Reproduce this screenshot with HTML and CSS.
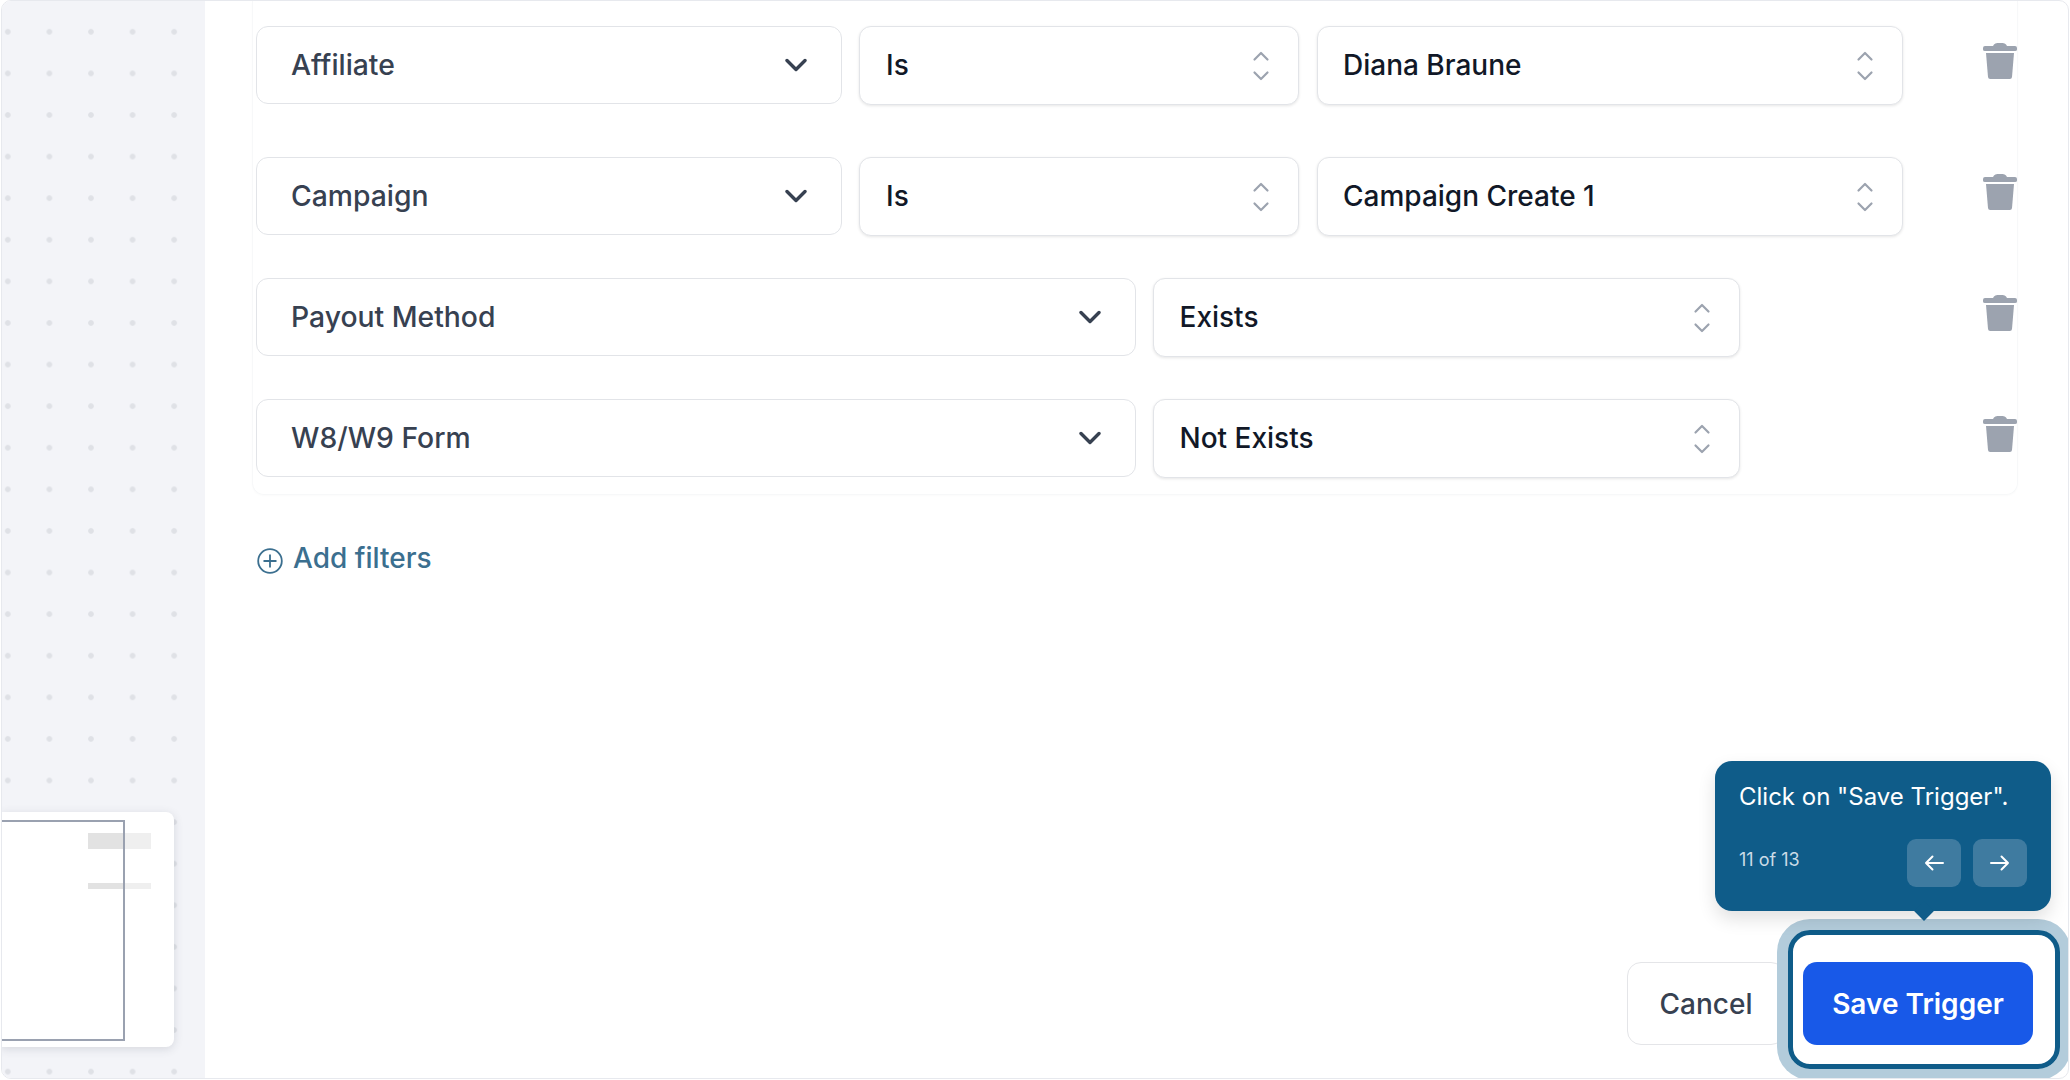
FILE: index.html
```html
<!DOCTYPE html>
<html lang="en">
<head>
<meta charset="utf-8">
<title>Save Trigger</title>
<link rel="stylesheet" href="styles.css">
</head>
<body>
<svg class="defs" width="0" height="0" aria-hidden="true">
  <symbol id="chev" viewBox="0 0 22 14"><path d="M2 2.5 11 11.5 20 2.5" fill="none" stroke="#374151" stroke-width="3.4" stroke-linecap="round" stroke-linejoin="round"/></symbol>
  <symbol id="updown" viewBox="0 0 18 30"><path d="M2.5 8.5 9 2 15.500 8.500M2.500 21.500 9 28 15.500 21.500" fill="none" stroke="#9ca3af" stroke-width="2.200" stroke-linecap="round" stroke-linejoin="round"/></symbol>
  <symbol id="trash" viewBox="0 0 34 38"><path d="M10 4C11 1.500 13 1 17 1S23 1.500 24 4H32Q34 4 34 6V7.500Q34 9 32 9H2Q0 9 0 7.500V6Q0 4 2 4Z" fill="#9ca3af"/><path d="M3 11H31L29 35Q28.800 37 26.800 37H7.200Q5.200 37 5 35Z" fill="#9ca3af"/></symbol>
</svg>
<div class="frame">
  <aside class="canvas">
    <div class="minimap">
      <div class="mini-block mini-block-tall"></div>
      <div class="mini-block mini-block-thin"></div>
      <div class="mini-view"></div>
    </div>
  </aside>
  <main class="main">
    <section class="filters">
      <div class="row row-first">
        <div class="field w-a"><span class="label">Affiliate</span><svg class="chev"><use href="#chev"/></svg></div>
        <div class="field tall w-b"><span class="value">Is</span><svg class="updown"><use href="#updown"/></svg></div>
        <div class="field tall w-c"><span class="value">Diana Braune</span><svg class="updown"><use href="#updown"/></svg></div>
        <svg class="trash"><use href="#trash"/></svg>
      </div>
      <div class="row row-second">
        <div class="field w-a"><span class="label">Campaign</span><svg class="chev"><use href="#chev"/></svg></div>
        <div class="field tall w-b"><span class="value">Is</span><svg class="updown"><use href="#updown"/></svg></div>
        <div class="field tall w-c"><span class="value">Campaign Create 1</span><svg class="updown"><use href="#updown"/></svg></div>
        <svg class="trash"><use href="#trash"/></svg>
      </div>
      <div class="row">
        <div class="field w-d"><span class="label">Payout Method</span><svg class="chev"><use href="#chev"/></svg></div>
        <div class="field tall w-e"><span class="value">Exists</span><svg class="updown"><use href="#updown"/></svg></div>
        <svg class="trash"><use href="#trash"/></svg>
      </div>
      <div class="row">
        <div class="field w-d"><span class="label">W8/W9 Form</span><svg class="chev"><use href="#chev"/></svg></div>
        <div class="field tall w-e"><span class="value">Not Exists</span><svg class="updown"><use href="#updown"/></svg></div>
        <svg class="trash"><use href="#trash"/></svg>
      </div>
    </section>
    <div class="add">
      <svg class="add-icon" viewBox="0 0 26 26"><circle cx="13" cy="13" r="11.800" fill="none" stroke="#3b6f8f" stroke-width="1.800"/><path d="M13 6.500V19.500M6.500 13H19.500" fill="none" stroke="#3b6f8f" stroke-width="1.800"/></svg>
      <span>Add filters</span>
    </div>
    <footer class="actions">
      <button class="btn btn-cancel">Cancel</button>
      <button class="btn btn-save">Save Trigger</button>
    </footer>
  </main>
  <div class="spot"></div>
  <div class="tip">
    <p class="tip-text">Click on "Save Trigger".</p>
    <div class="tip-foot">
      <span class="tip-count">11 of 13</span>
      <div class="tip-nav">
        <span class="tip-btn"><svg width="20" height="16" viewBox="0 0 20 16"><path d="M19 8H2M8.500 1.500 2 8 8.500 14.500" fill="none" stroke="#fff" stroke-width="2" stroke-linecap="round" stroke-linejoin="round"/></svg></span>
        <span class="tip-btn"><svg width="20" height="16" viewBox="0 0 20 16"><path d="M1 8H18M11.500 1.500 18 8 11.500 14.500" fill="none" stroke="#fff" stroke-width="2" stroke-linecap="round" stroke-linejoin="round"/></svg></span>
      </div>
    </div>
  </div>
</div>
</body>
</html>
```
FILE: styles.css
```css
* { box-sizing: border-box; }
html, body { margin: 0; padding: 0; background: #fff; }
body {
  width: 2070px;
  height: 1080px;
  overflow: hidden;
  font-family: Inter, "Liberation Sans", sans-serif;
  padding: 0 1px 1px 1px;
}
.defs { position: absolute; }
.frame {
  position: relative;
  display: flex;
  height: 1079px;
  border: 1px solid #e7e9ee;
  border-radius: 10px;
  overflow: hidden;
  background: #fff;
}
.canvas {
  position: relative;
  flex: 0 0 203px;
  background-color: #f3f4f8;
  background-image: radial-gradient(circle, #dfe1e6 0, #dfe1e6 2.4px, transparent 3.2px);
  background-size: 41.6px 41.6px;
  background-position: -15px 10px;
}
.minimap {
  position: absolute;
  left: -1px;
  top: 811px;
  width: 173px;
  height: 235px;
  background: #fff;
  border-radius: 0 8px 8px 0;
  box-shadow: 0 2px 10px rgba(60, 70, 90, .16);
}
.mini-block { position: absolute; left: 87px; width: 63px; background: #efefef; }
.mini-block::before { content: ""; display: block; width: 35px; height: 100%; background: #e2e2e2; }
.mini-block-tall { top: 21px; height: 16px; }
.mini-block-thin { top: 71px; height: 6px; }
.mini-view {
  position: absolute;
  left: 0;
  top: 8px;
  width: 124px;
  height: 221px;
  border: 2px solid #9aa1b0;
  border-left: 0;
}
.main {
  flex: 1;
  display: flex;
  flex-direction: column;
  padding-left: 47px;
  min-width: 0;
}
.filters {
  width: 1766px;
  padding: 25px 0 16px 3px;
  display: flex;
  flex-direction: column;
  gap: 42px;
  border: 1px solid #f7f8f9;
  border-top: 0;
  border-radius: 0 0 12px 12px;
  box-shadow: 0 1px 2px rgba(0, 0, 0, .02);
}
.row { position: relative; display: flex; gap: 17px; height: 79px; }
.row-first { margin-bottom: 10px; }
.field {
  display: flex;
  align-items: center;
  justify-content: space-between;
  height: 78px;
  padding: 0 26px;
  background: #fff;
  border: 1.500px solid #e2e4e8;
  border-radius: 12px;
  font-size: 28.300px;
  line-height: 34px;
}
.field.tall { height: 79px; box-shadow: 0 1px 3px rgba(0, 0, 0, .1); }
.label { padding-left: 8px; color: #374151; font-weight: 500; }
.value { margin-top: -1px; color: #111827; font-size: 28px; font-weight: 450; }
.w-a { width: 586px; }
.w-b { width: 440px; }
.w-c { width: 586px; margin-left: 1px; padding-left: 25px; }
.w-d { width: 879.500px; }
.w-e { width: 587px; }
.chev { width: 22px; height: 14px; margin-right: 8px; flex: none; }
.updown { width: 18px; height: 30px; margin-right: 2px; flex: none; }
.trash { position: absolute; right: 0; top: 16px; width: 34px; height: 38px; }
.add {
  display: flex;
  align-items: center;
  gap: 10px;
  margin-top: 43px;
  margin-left: 5px;
  height: 40px;
  font-size: 28px;
  font-weight: 450;
  color: #3b6f8f;
}
.add-icon { width: 26px; height: 26px; flex: none; margin-top: 5px; }
.actions {
  position: absolute;
  right: 35px;
  top: 961px;
  display: flex;
  gap: 18px;
}
.btn {
  height: 83px;
  border-radius: 14px;
  font-family: inherit;
  font-size: 28px;
}
.btn-cancel {
  width: 158px;
  padding: 0;
  background: #fff;
  border: 1.500px solid #e4e5e8;
  color: #374151;
  font-weight: 500;
}
.btn-save {
  width: 230px;
  padding: 0;
  background: #1859e8;
  border: 0;
  color: #fff;
  font-weight: 600;
}
.spot {
  position: absolute;
  left: 1786px;
  top: 929px;
  width: 272px;
  height: 139px;
  border: 5px solid #0f5c89;
  border-radius: 22px;
  box-shadow: 0 0 0 11px #b3ccdb;
}
.tip {
  position: absolute;
  left: 1713px;
  top: 760px;
  width: 336px;
  height: 150px;
  padding: 20px 24px 24px 24px;
  background: #0f5c89;
  border-radius: 17px;
  box-shadow: 0 8px 18px rgba(0, 0, 0, .12);
  color: #fff;
}
.tip::after {
  content: "";
  position: absolute;
  left: 202px;
  bottom: -7px;
  width: 14px;
  height: 14px;
  background: #0f5c89;
  transform: rotate(45deg);
}
.tip-text { margin: 0; font-size: 24px; line-height: 32px; font-weight: 400; }
.tip-foot { display: flex; align-items: flex-start; justify-content: space-between; margin-top: 26px; }
.tip-count { margin-top: 9px; font-size: 18px; line-height: 24px; color: #cbdbe6; }
.tip-nav { display: flex; gap: 12px; }
.tip-btn {
  display: flex;
  align-items: center;
  justify-content: center;
  width: 54px;
  height: 48px;
  background: #3f7ba0;
  border-radius: 9px;
}
```
